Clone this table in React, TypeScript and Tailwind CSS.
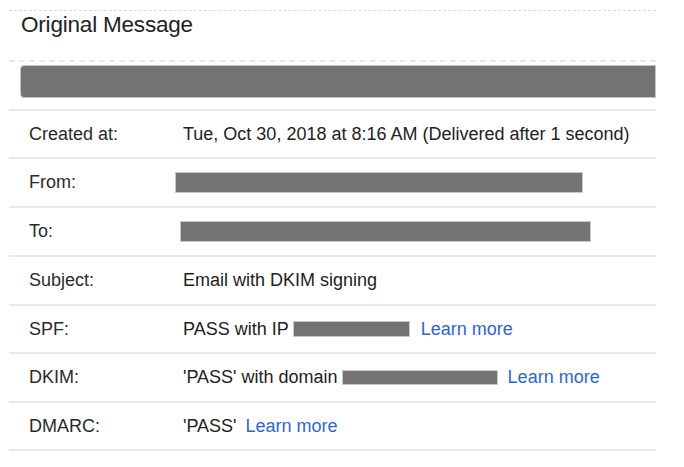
import React from "react";

const Bar = ({ cls }: { cls: string }) => (
  <span className={"inline-block bg-[#737373] border border-[#c9c9c9] " + cls} />
);

const Link = ({ cls }: { cls: string }) => (
  <span className={"text-[#2e66cf] " + cls}>Learn more</span>
);

export default function App() {
  const rows: { label: string; h: string; value: React.ReactNode }[] = [
    {
      label: "Created at:",
      h: "h-[48px]",
      value: <span>Tue, Oct 30, 2018 at 8:16 AM (Delivered after 1 second)</span>,
    },
    { label: "From:", h: "h-[49px]", value: <Bar cls="ml-[-8px] w-[408px] h-[21px]" /> },
    { label: "To:", h: "h-[49px]", value: <Bar cls="ml-[-3px] w-[411px] h-[21px]" /> },
    { label: "Subject:", h: "h-[49px]", value: <span>Email with DKIM signing</span> },
    {
      label: "SPF:",
      h: "h-[48px]",
      value: (
        <>
          <span>PASS with IP</span>
          <Bar cls="ml-[4px] w-[117px] h-[16px]" />
          <Link cls="ml-[11px]" />
        </>
      ),
    },
    {
      label: "DKIM:",
      h: "h-[49px]",
      value: (
        <>
          <span>'PASS' with domain</span>
          <Bar cls="ml-[4px] w-[156px] h-[15px]" />
          <Link cls="ml-[10px]" />
        </>
      ),
    },
    {
      label: "DMARC:",
      h: "h-[48px]",
      value: (
        <>
          <span>'PASS'</span>
          <Link cls="ml-[9px]" />
        </>
      ),
    },
  ];

  return (
    <div
      className="w-[684px] h-[467px] bg-white overflow-hidden text-[#222]"
      style={{ fontFamily: '"Liberation Sans", Arial, sans-serif' }}
    >
      <div className="h-[10px]" />
      <div className="ml-[9px] w-[647px]">
        <div className="h-[52px] border-t border-dashed border-[#dadada] border-b-2 border-b-[#e8e8e8] pl-[12px]">
          <span className="text-[22.5px] leading-[28px] tracking-[-0.2px]">Original Message</span>
        </div>
        <div className="h-[49px] border-b-2 border-[#e8e8e8] pl-[11px] pt-[3px]">
          <div className="h-[33px] bg-[#737373] border border-[#c4c4c4] rounded-l-[4px]" />
        </div>
        {rows.map((r) => (
          <div
            key={r.label}
            className={"flex items-center border-b-2 border-[#e8e8e8] text-[18px] " + r.h}
          >
            <div className="w-[174px] pl-[20px] text-[#2a2a2a]">{r.label}</div>
            <div className="flex items-center">{r.value}</div>
          </div>
        ))}
      </div>
    </div>
  );
}
